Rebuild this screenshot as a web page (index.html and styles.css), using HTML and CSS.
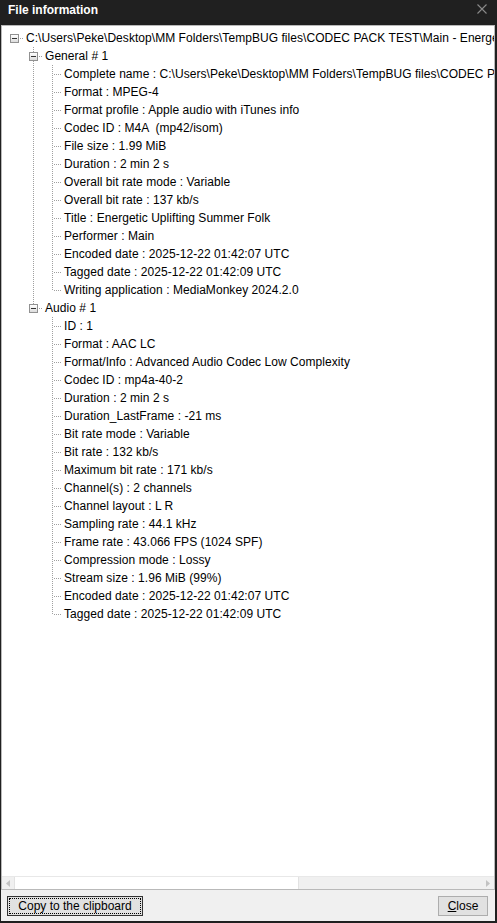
FILE: index.html
```html
<!DOCTYPE html>
<html>
<head>
<meta charset="utf-8">
<title>File information</title>
<link rel="stylesheet" href="styles.css">
</head>
<body>
<div class="window">
  <div class="titlebar">
    <span class="title">File information</span>
    <svg class="xbtn" width="10" height="10" viewBox="0 0 10 10"><path d="M0.5 0.5L9.5 9.5M9.5 0.5L0.5 9.5" stroke="#8a8a8a" stroke-width="1.1" fill="none"/></svg>
  </div>
  <div class="client">
    <div class="tree">
      <div class="tree-body">
        <div class="row"><span class="cell box-cell"><span class="box"></span></span><span class="label l0">C:\Users\Peke\Desktop\MM Folders\TempBUG files\CODEC PACK TEST\Main - Energetic Uplifting Summer Folk.m4a</span></div>
        <div class="row"><span class="cell"></span><span class="cell box-cell up down"><span class="box"></span></span><span class="label l1">General # 1</span></div>
        <div class="row"><span class="cell"></span><span class="cell pipe"></span><span class="cell tee"></span><span class="label">Complete name : C:\Users\Peke\Desktop\MM Folders\TempBUG files\CODEC PACK TEST\Main - Energetic Uplifting Summer Folk.m4a</span></div>
        <div class="row"><span class="cell"></span><span class="cell pipe"></span><span class="cell tee"></span><span class="label">Format : MPEG-4</span></div>
        <div class="row"><span class="cell"></span><span class="cell pipe"></span><span class="cell tee"></span><span class="label">Format profile : Apple audio with iTunes info</span></div>
        <div class="row"><span class="cell"></span><span class="cell pipe"></span><span class="cell tee"></span><span class="label">Codec ID : M4A  (mp42/isom)</span></div>
        <div class="row"><span class="cell"></span><span class="cell pipe"></span><span class="cell tee"></span><span class="label">File size : 1.99 MiB</span></div>
        <div class="row"><span class="cell"></span><span class="cell pipe"></span><span class="cell tee"></span><span class="label">Duration : 2 min 2 s</span></div>
        <div class="row"><span class="cell"></span><span class="cell pipe"></span><span class="cell tee"></span><span class="label">Overall bit rate mode : Variable</span></div>
        <div class="row"><span class="cell"></span><span class="cell pipe"></span><span class="cell tee"></span><span class="label">Overall bit rate : 137 kb/s</span></div>
        <div class="row"><span class="cell"></span><span class="cell pipe"></span><span class="cell tee"></span><span class="label">Title : Energetic Uplifting Summer Folk</span></div>
        <div class="row"><span class="cell"></span><span class="cell pipe"></span><span class="cell tee"></span><span class="label">Performer : Main</span></div>
        <div class="row"><span class="cell"></span><span class="cell pipe"></span><span class="cell tee"></span><span class="label">Encoded date : 2025-12-22 01:42:07 UTC</span></div>
        <div class="row"><span class="cell"></span><span class="cell pipe"></span><span class="cell tee"></span><span class="label">Tagged date : 2025-12-22 01:42:09 UTC</span></div>
        <div class="row"><span class="cell"></span><span class="cell pipe"></span><span class="cell elbow"></span><span class="label">Writing application : MediaMonkey 2024.2.0</span></div>
        <div class="row"><span class="cell"></span><span class="cell box-cell up"><span class="box"></span></span><span class="label l1">Audio # 1</span></div>
        <div class="row"><span class="cell"></span><span class="cell"></span><span class="cell tee"></span><span class="label">ID : 1</span></div>
        <div class="row"><span class="cell"></span><span class="cell"></span><span class="cell tee"></span><span class="label">Format : AAC LC</span></div>
        <div class="row"><span class="cell"></span><span class="cell"></span><span class="cell tee"></span><span class="label">Format/Info : Advanced Audio Codec Low Complexity</span></div>
        <div class="row"><span class="cell"></span><span class="cell"></span><span class="cell tee"></span><span class="label">Codec ID : mp4a-40-2</span></div>
        <div class="row"><span class="cell"></span><span class="cell"></span><span class="cell tee"></span><span class="label">Duration : 2 min 2 s</span></div>
        <div class="row"><span class="cell"></span><span class="cell"></span><span class="cell tee"></span><span class="label">Duration_LastFrame : -21 ms</span></div>
        <div class="row"><span class="cell"></span><span class="cell"></span><span class="cell tee"></span><span class="label">Bit rate mode : Variable</span></div>
        <div class="row"><span class="cell"></span><span class="cell"></span><span class="cell tee"></span><span class="label">Bit rate : 132 kb/s</span></div>
        <div class="row"><span class="cell"></span><span class="cell"></span><span class="cell tee"></span><span class="label">Maximum bit rate : 171 kb/s</span></div>
        <div class="row"><span class="cell"></span><span class="cell"></span><span class="cell tee"></span><span class="label">Channel(s) : 2 channels</span></div>
        <div class="row"><span class="cell"></span><span class="cell"></span><span class="cell tee"></span><span class="label">Channel layout : L R</span></div>
        <div class="row"><span class="cell"></span><span class="cell"></span><span class="cell tee"></span><span class="label">Sampling rate : 44.1 kHz</span></div>
        <div class="row"><span class="cell"></span><span class="cell"></span><span class="cell tee"></span><span class="label">Frame rate : 43.066 FPS (1024 SPF)</span></div>
        <div class="row"><span class="cell"></span><span class="cell"></span><span class="cell tee"></span><span class="label">Compression mode : Lossy</span></div>
        <div class="row"><span class="cell"></span><span class="cell"></span><span class="cell tee"></span><span class="label">Stream size : 1.96 MiB (99%)</span></div>
        <div class="row"><span class="cell"></span><span class="cell"></span><span class="cell tee"></span><span class="label">Encoded date : 2025-12-22 01:42:07 UTC</span></div>
        <div class="row"><span class="cell"></span><span class="cell"></span><span class="cell elbow"></span><span class="label">Tagged date : 2025-12-22 01:42:09 UTC</span></div>
      </div>
      <div class="hscroll">
        <div class="sb-arrow"><svg width="4" height="7" viewBox="0 0 4 7"><path d="M4 0L0 3.5L4 7Z" fill="#c2c2c2"/></svg></div>
        <div class="sb-thumb"></div>
        <div class="sb-track"></div>
        <div class="sb-arrow"><svg width="4" height="7" viewBox="0 0 4 7"><path d="M0 0L4 3.5L0 7Z" fill="#c2c2c2"/></svg></div>
      </div>
    </div>
    <div class="buttons">
      <button class="btn btn-default"><span class="focus">Copy to the clipboard</span></button>
      <button class="btn btn-close"><u>C</u>lose</button>
    </div>
  </div>
</div>
</body>
</html>
```
FILE: styles.css
```css
html, body {
  margin: 0;
  padding: 0;
}
body {
  background: #202020;
  width: 497px;
  height: 923px;
  overflow: hidden;
  font-family: "Liberation Sans", Arial, sans-serif;
  font-size: 12px;
  color: #000;
}
.window {
  display: flex;
  flex-direction: column;
  width: 497px;
  height: 923px;
}
.titlebar {
  height: 25px;
  flex: none;
  display: flex;
  align-items: flex-start;
  justify-content: space-between;
  padding: 3px 10px 0 8px;
  box-sizing: border-box;
  background: #202020;
}
.title {
  color: #fff;
  font-weight: bold;
  font-size: 12px;
  line-height: 14px;
}
.xbtn {
  margin-top: 1px;
  display: block;
}
.client {
  flex: none;
  height: 896px;
  margin: 0 2px 0 1px;
  background: #f0f0f0;
  display: flex;
  flex-direction: column;
}
.tree {
  flex: none;
  height: 865px;
  box-sizing: border-box;
  border: 1px solid #b9b9b9;
  background: #fff;
  display: flex;
  flex-direction: column;
}
.tree-body {
  flex: 1;
  overflow: hidden;
  padding: 3px 0 0 3px;
}
.row {
  display: flex;
  height: 18px;
  line-height: 18px;
  white-space: pre;
}
.cell {
  flex: none;
  width: 19px;
  height: 18px;
  position: relative;
}
.label {
  margin-left: 2px;
  letter-spacing: 0.05px;
}
/* dotted tree lines */
.pipe::before,
.tee::before,
.elbow::before,
.box-cell.up::before,
.box-cell.down::after {
  content: "";
  position: absolute;
  left: 9px;
  width: 1px;
  background: repeating-linear-gradient(to bottom, #a0a0a0 0 1px, transparent 1px 2px);
}
.pipe::before, .tee::before { top: 0; height: 18px; }
.elbow::before { top: 0; height: 10px; }
.box-cell.up::before { top: 0; height: 5px; }
.box-cell.down::after { top: 14px; height: 4px; }
.tee::after,
.elbow::after {
  content: "";
  position: absolute;
  top: 9px;
  left: 11px;
  width: 8px;
  height: 1px;
  background: repeating-linear-gradient(to right, #a0a0a0 0 1px, transparent 1px 2px);
}
.box-cell {
  background: repeating-linear-gradient(to right, #a0a0a0 0 1px, transparent 1px 2px) 15px 9px / 4px 1px no-repeat;
}
.box {
  position: absolute;
  left: 5px;
  top: 5px;
  width: 9px;
  height: 9px;
  box-sizing: border-box;
  border: 1px solid #919191;
  background: linear-gradient(#ffffff, #dcdcdc);
}
.box::after {
  content: "";
  position: absolute;
  left: 1px;
  top: 3px;
  width: 5px;
  height: 1px;
  background: #333;
}
/* scrollbar */
.hscroll {
  flex: none;
  height: 13px;
  display: flex;
  background: #f0f0f0;
  border-top: 1px solid #e8e8e8;
  box-sizing: border-box;
}
.sb-arrow {
  width: 12px;
  flex: none;
  display: flex;
  align-items: center;
  justify-content: center;
}
.sb-thumb {
  width: 285px;
  flex: none;
  background: #fff;
  border: 1px solid #e2e2e2;
  border-top: none;
  border-bottom: none;
  box-sizing: border-box;
}
.sb-track {
  flex: 1;
}
/* buttons */
.buttons {
  flex: 1;
  display: flex;
  justify-content: space-between;
  align-items: flex-start;
  padding: 6px 7px 0 6px;
}
.btn {
  font-family: "Liberation Sans", Arial, sans-serif;
  font-size: 12px;
  color: #000;
  height: 20px;
  background: #e1e1e1;
  border: 1px solid #adadad;
  padding: 0;
  margin: 0;
  box-sizing: border-box;
  line-height: 16px;
}
.btn-default {
  width: 136px;
  border-color: #333;
  padding: 1px;
}
.focus {
  display: block;
  height: 16px;
  border: 1px dotted #000;
  box-sizing: border-box;
  line-height: 14px;
}
.btn-close {
  width: 50px;
}
```
